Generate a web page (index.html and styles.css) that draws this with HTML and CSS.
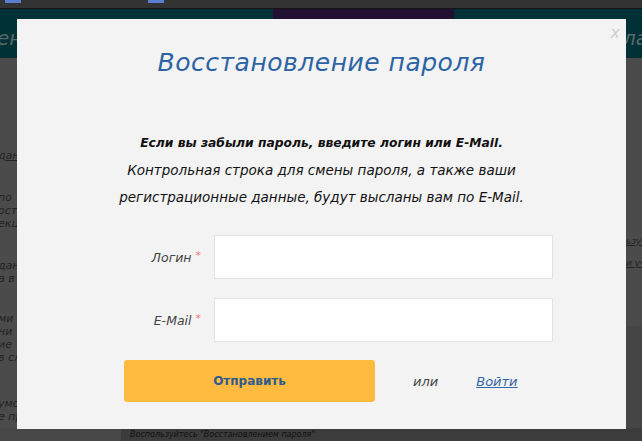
FILE: index.html
```html
<!DOCTYPE html>
<html lang="ru">
<head>
<meta charset="utf-8">
<title>Восстановление пароля</title>
<link rel="stylesheet" href="styles.css">
</head>
<body>
<div class="page">
  <div class="topbar">
    <span class="tab-icon"></span>
    <span class="tab-icon tab-icon-2"></span>
  </div>
  <header class="hdr">
    <span class="hdr-text hdr-left">ен</span>
    <div class="hdr-purple"></div>
    <span class="hdr-text hdr-right">ла</span>
  </header>
  <main class="content">
    <div class="side-left">
      <p class="frag p1"><u>дан</u></p>
      <p class="frag p2">по<br>остр<br>екц</p>
      <p class="frag p3">дан<br>а в</p>
      <p class="frag p4">ми<br>ни<br>ие<br>в сл</p>
      <p class="frag p5">умо<br>е пр</p>
    </div>
    <div class="center-col"></div>
    <div class="side-right">
      <p class="frag r1"><u>ьзуй</u></p>
      <p class="frag r2"><u>и уче</u></p>
      <div class="side-right-low"></div>
    </div>
  </main>
  <div class="bottom">
    <div class="bottom-left"></div>
    <div class="bottom-strip">Воспользуйтесь "Восстановлением пароля"</div>
  </div>
</div>

<div class="modal">
  <span class="close">x</span>
  <h1 class="title">Восстановление пароля</h1>
  <div class="intro">
    <p class="intro-lead"><b>Если вы забыли пароль, введите логин или E-Mail.</b></p>
    <p>Контрольная строка для смены пароля, а также ваши</p>
    <p>регистрационные данные, будут высланы вам по E-Mail.</p>
  </div>
  <form class="form">
    <label class="lbl">Логин <span class="req">*</span></label>
    <input class="inp" type="text">
    <label class="lbl">E-Mail <span class="req">*</span></label>
    <input class="inp" type="text">
  </form>
  <div class="actions">
    <button class="btn" type="button">Отправить</button>
    <span class="or">или</span>
    <a class="login" href="#">Войти</a>
  </div>
</div>
</body>
</html>
```

FILE: styles.css
```css
* { box-sizing: border-box; }
html, body { margin: 0; padding: 0; }
body {
  width: 642px;
  height: 441px;
  overflow: hidden;
  background: #4b4b4b;
  font-family: "DejaVu Sans", "Lato", sans-serif;
  position: relative;
}
.page { width: 642px; height: 441px; display: flex; flex-direction: column; }

.topbar {
  height: 9px;
  background: #333333;
  border-bottom: 1px solid #161616;
  display: flex;
  align-items: flex-start;
}
.tab-icon { width: 16px; height: 3px; background: #5a7fd0; margin-left: 5px; }
.tab-icon-2 { margin-left: 127px; }

.hdr {
  height: 49px;
  background: #003136;
  display: flex;
  align-items: flex-start;
  position: relative;
}
.hdr-text {
  color: #56686a;
  font-style: italic;
  font-size: 20px;
  line-height: 24px;
  margin-top: 17px;
  white-space: nowrap;
}
.hdr-left { width: 276px; margin-left: -3px; }
.hdr-purple { width: 181px; height: 10px; background: #211032; }
.hdr-right { margin-left: auto; margin-right: -6px; }

.content { display: grid; grid-template-columns: 17px 1fr 16px; height: 371px; }
.frag {
  margin: 0;
  font-style: italic;
  font-size: 11px;
  line-height: 13px;
  color: #232323;
  white-space: nowrap;
}
.side-left { overflow: hidden; }
.side-left .frag { margin-left: -2px; }
.p1 { margin-top: 91px !important; }
.p2 { margin-top: 29px !important; }
.p3 { margin-top: 29px !important; }
.p4 { margin-top: 27px !important; }
.p5 { margin-top: 33px !important; }
.side-right { display: flex; flex-direction: column; overflow: hidden; }
.r1 { margin-top: 177px; font-size: 9px; }
.r2 { margin-top: 9px; font-size: 9px; }
.side-right-low { margin-top: auto; height: 102px; background: #454545; }

.bottom { flex: 1; display: flex; }
.bottom-left { width: 121px; background: #474747; }
.bottom-strip {
  flex: 1;
  background: #3c3c3c;
  color: #111;
  font-style: italic;
  font-size: 8px;
  line-height: 12px;
  padding: 1px 0 0 9px;
  white-space: nowrap;
  overflow: hidden;
}

.modal {
  position: absolute;
  left: 17px;
  top: 19px;
  width: 609px;
  height: 410px;
  background: #f3f3f3;
  padding-top: 26px;
}
.close {
  position: absolute;
  top: 4px;
  right: 6px;
  color: #cfcfcf;
  font-style: italic;
  font-size: 16px;
  line-height: 20px;
}
.title {
  margin: 0;
  text-align: center;
  color: #2c63a4;
  font-weight: 400;
  font-style: italic;
  font-size: 25px;
  line-height: 36px;
  letter-spacing: 0.5px;
}
.intro { margin-top: 49px; text-align: center; }
.intro p {
  margin: 0;
  font-style: italic;
  font-size: 13.5px;
  line-height: 27px;
  color: #111;
}
.intro .intro-lead { font-size: 12.3px; }
.form {
  margin: 24px 0 0 107px;
  display: grid;
  grid-template-columns: 77px 339px;
  grid-auto-rows: 44px;
  column-gap: 13px;
  row-gap: 19px;
}
.lbl {
  align-self: center;
  text-align: right;
  font-style: italic;
  font-size: 12.5px;
  color: #444;
  white-space: nowrap;
}
.req { color: #f27a7a; font-style: normal; font-size: 11px; position: relative; top: -3px; }
.inp {
  width: 339px;
  height: 44px;
  border: 1px solid #e3e3e3;
  background: #fff;
  margin: 0;
}
.actions {
  margin: 18px 0 0 107px;
  display: flex;
  align-items: center;
}
.btn {
  width: 251px;
  height: 42px;
  border: 0;
  border-radius: 3px;
  background: #ffbb40;
  color: #2e5a8f;
  font-family: inherit;
  font-weight: 700;
  font-size: 12px;
  padding: 0;
}
.or {
  margin-left: 38px;
  font-style: italic;
  font-size: 13px;
  color: #444;
}
.login {
  margin-left: 38px;
  font-style: italic;
  font-size: 13px;
  color: #3466a6;
  text-decoration: underline;
}
```
